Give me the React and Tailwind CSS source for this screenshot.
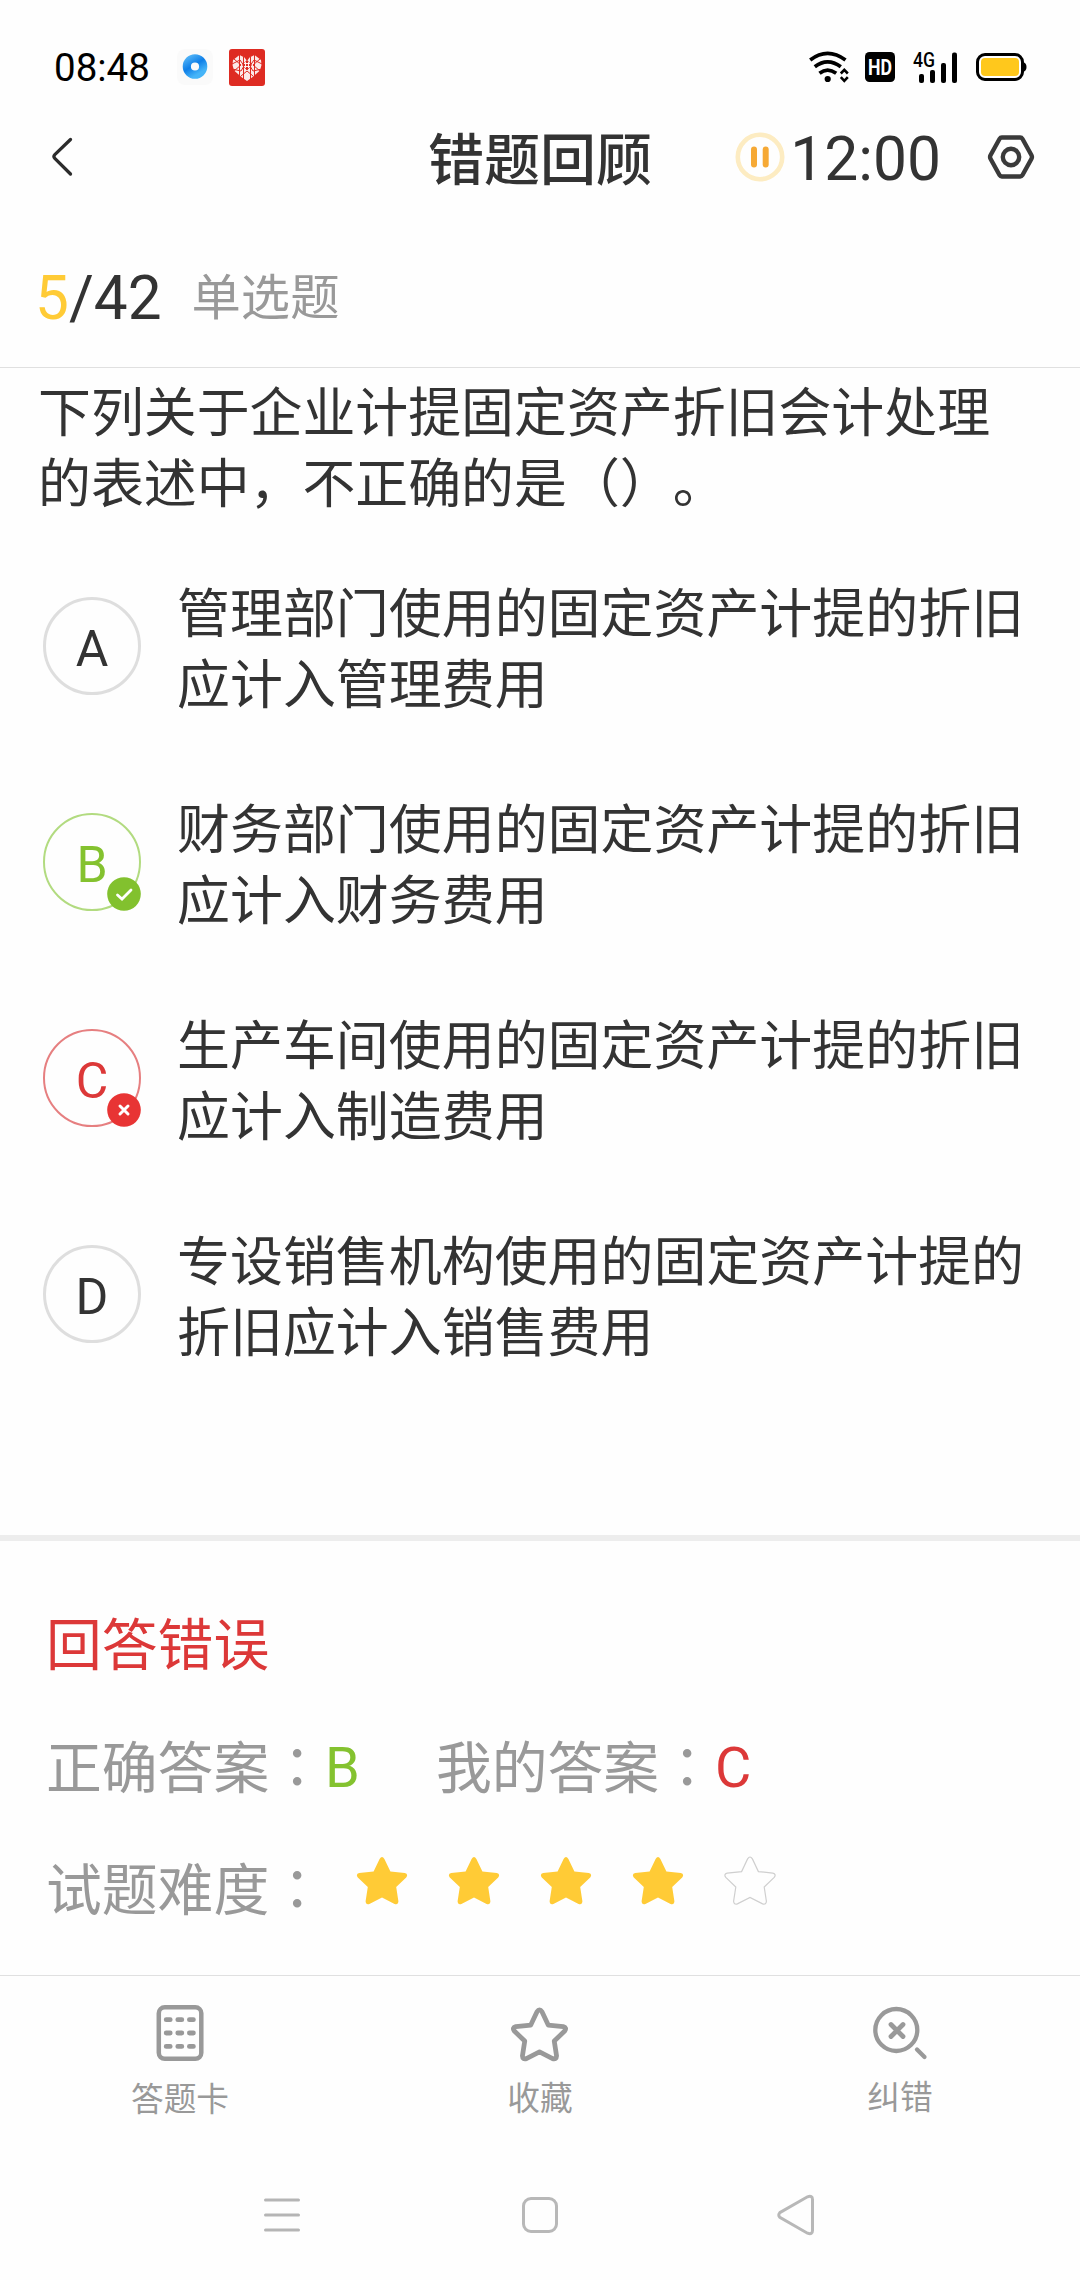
const STAR =
  "M22.6 2.9 Q25 -0.9 27.4 2.9 L33.4 15.6 L47.8 17.1 Q51.6 18.2 49.2 21.4 L39.2 31 L41.4 45.2 Q41.2 49 37.6 47.9 L25 41.5 L12.4 47.9 Q8.8 49 8.6 45.2 L10.8 31 L0.8 21.4 Q-1.6 18.2 2.2 17.1 L16.6 15.6 Z";

function StatusBar() {
  return (
    <div className="flex h-[112px] items-center pt-[22px] pl-[54px] pr-[53px]">
      <span className="mt-[2px] w-[98px] font-['Roboto'] text-[38.5px] leading-none text-black">08:48</span>
      <svg className="ml-[25px] shrink-0" width="36" height="36" viewBox="0 0 36 36">
        <defs>
          <linearGradient id="ring" x1="0" y1="0" x2="0.6" y2="1">
            <stop offset="0" stopColor="#4aaef5" />
            <stop offset="0.5" stopColor="#0f7fe8" />
            <stop offset="1" stopColor="#45b4f8" />
          </linearGradient>
        </defs>
        <rect width="36" height="36" rx="8" fill="#fafafa" />
        <circle cx="18" cy="17.5" r="8.2" fill="none" stroke="url(#ring)" strokeWidth="8.2" />
      </svg>
      <svg className="ml-[16px] shrink-0" width="36" height="37" viewBox="0 0 36 37">
        <rect width="36" height="37" rx="3" fill="#de2b22" />
        <path d="M18 32 L13 28.500 L5 21.500 L3.500 16 L4 11 L10.500 6 L15.500 8.500 L18 12 L20.500 8.500 L25.500 6 L32 11 L32.500 16 L31 21.500 L23 28.500 Z" fill="#fbe9e8" />
        <path d="M3 15 L11 11 L18 21 L25 11 L33 15 M3 20 L12 22 L18 12 L24 22 L33 20 M10.500 6 V27 M25.500 6 V27 M14.500 8 V30 M21.500 8 V30 M5 10 L12 16 L5 22 M31 10 L24 16 L31 22 M12 27 L18 22 L24 27" stroke="#de2b22" strokeWidth="1" fill="none" />
        <path d="M18 11 L23 16 L18 21 L13 16 Z" fill="#de2b22" />
        <path d="M15 14.500 H21 M15 17.500 H21 M16.500 13 V19 M19.500 13 V19" stroke="#fff" strokeWidth="0.9" />
      </svg>
      <div className="ml-auto flex items-center">
        <svg width="40" height="32" viewBox="0 0 40 32">
          <g fill="none" stroke="#000" strokeWidth="3.700">
            <path d="M1.200 9 Q18.500 -4.200 36.500 9" />
            <path d="M5.800 15.800 Q18.500 5.800 31.800 15.800" />
            <path d="M10.500 22.300 Q18.500 16 27.200 22.300" />
          </g>
          <circle cx="18.700" cy="28" r="3.100" />
          <path d="M31.800 22.500 L35.300 18.800 L38.800 22.500 M31.800 26.200 L35.300 29.900 L38.800 26.200" stroke="#000" strokeWidth="2.600" fill="none" />
        </svg>
        <svg className="ml-[16px] overflow-visible" width="30" height="30" viewBox="0 0 30 30">
          <rect width="30" height="30" rx="4.500" />
          <text x="3" y="23" textLength="24" lengthAdjust="spacingAndGlyphs" fill="#fff" className="font-['Roboto'] text-[22px] font-bold">HD</text>
        </svg>
        <svg className="ml-[18px] overflow-visible" width="45" height="31" viewBox="0 0 45 31">
          <text x="0" y="15" textLength="22" lengthAdjust="spacingAndGlyphs" className="font-['Roboto'] text-[20px] font-medium">4G</text>
          <rect x="6" y="22" width="5" height="9" rx="2" />
          <rect x="17" y="18" width="5" height="13" rx="2" />
          <rect x="28" y="11" width="5" height="20" rx="2" />
          <rect x="39" y="0.500" width="5" height="30.500" rx="2" />
        </svg>
        <svg className="ml-[18px]" width="51" height="28" viewBox="0 0 51 28">
          <rect x="1.500" y="1.500" width="45" height="25" rx="7.500" fill="#fff" stroke="#000" strokeWidth="3" />
          <path d="M47 9 Q50.500 10 50.500 14 Q50.500 18 47 19 Z" />
          <rect x="5" y="5" width="38" height="18" rx="4" fill="#ffc81c" />
        </svg>
      </div>
    </div>
  );
}

function Header() {
  return (
    <div className="grid h-[90px] grid-cols-[1fr_auto_1fr] items-center">
      <svg className="ml-[50px]" width="24" height="40" viewBox="0 0 24 40">
        <path d="M20.500 2.500 L4.800 17.600 Q2.900 19.500 4.800 21.400 L20.500 37" fill="none" stroke="#2c2c2c" strokeWidth="3.300" strokeLinecap="round" />
      </svg>
      <h1 className="-mt-[2px] font-['Noto_Sans_CJK_SC',sans-serif] text-[56px] leading-[80px] font-medium text-[#333333]">错题回顾</h1>
      <div className="flex items-center justify-end pr-[45px]">
        <svg width="50" height="50" viewBox="0 0 50 50">
          <circle cx="25" cy="25" r="22.200" fill="none" stroke="#fdecc2" strokeWidth="4.600" />
          <rect x="16" y="14.500" width="6" height="21" rx="3" fill="#f6a935" />
          <rect x="27.700" y="14.500" width="6" height="21" rx="3" fill="#f6a935" />
        </svg>
        <span className="ml-[5px] mt-[6px] font-['Roboto'] text-[60.5px] leading-none text-[#333333]">12:00</span>
        <svg className="ml-[46px]" width="48" height="46" viewBox="0 0 48 46">
          <path d="M14.800 3.500 H33.200 Q34.600 3.500 35.400 4.800 L44.500 21.300 Q45.400 23 44.500 24.700 L35.400 41.200 Q34.600 42.500 33.200 42.500 H14.800 Q13.400 42.500 12.600 41.200 L3.500 24.700 Q2.600 23 3.500 21.300 L12.600 4.800 Q13.400 3.500 14.800 3.500 Z" fill="none" stroke="#3a3a3a" strokeWidth="4.400" />
          <circle cx="24" cy="23" r="8.200" fill="none" stroke="#3a3a3a" strokeWidth="4.400" />
        </svg>
      </div>
    </div>
  );
}

const OPTIONS = [
  { key: "A", text: "管理部门使用的固定资产计提的折旧应计入管理费用" },
  { key: "B", text: "财务部门使用的固定资产计提的折旧应计入财务费用", state: "right" },
  { key: "C", text: "生产车间使用的固定资产计提的折旧应计入制造费用", state: "wrong" },
  { key: "D", text: "专设销售机构使用的固定资产计提的折旧应计入销售费用" },
];

const MARKS = {
  right: "border-[2px] border-[#b2db80] text-[#84c22f]",
  wrong: "border-[2px] border-[#e67f80] text-[#dc3838]",
  plain: "border-[3px] border-[#dedede] text-[#333333]",
};

function Option({ item }) {
  return (
    <li className="flex h-[216px] items-center pl-[43px]">
      <div className={`relative flex size-[98px] shrink-0 items-center justify-center rounded-full font-['Roboto'] text-[50px] leading-none ${MARKS[item.state || "plain"]}`}>
        <span className="mt-[5px]">{item.key}</span>
        {item.state && (
          <svg className="absolute -right-[2px] -bottom-[2px]" width="34" height="34" viewBox="0 0 34 34">
            <circle cx="17" cy="17" r="16.800" fill={item.state === "right" ? "#82c12e" : "#e83434"} />
            {item.state === "right" ? (
              <path d="M10.500 18 L15 22 L24 13" fill="none" stroke="#fff" strokeWidth="2.800" strokeLinecap="round" />
            ) : (
              <path d="M13 13 L21 21 M21 13 L13 21" stroke="#fff" strokeWidth="3" strokeLinecap="round" />
            )}
          </svg>
        )}
      </div>
      <p className="ml-[36px] w-[860px] text-[52.95px] leading-[71.3px] text-[#333333]">{item.text}</p>
    </li>
  );
}

function Colon() {
  return <span className="font-['Noto_Sans_CJK_TC']">：</span>;
}

function Result() {
  return (
    <section className="h-[440px] border-t-[6px] border-[#ededed] pt-[39px] pl-[46px] text-[55.8px] leading-[122.5px] text-[#999999]">
      <p className="h-[122.5px] text-[#dc3838]">回答错误</p>
      <div className="flex h-[122.5px]">
        <span>正确答案<Colon /></span>
        <span className="w-[111px] pt-[4px] font-['Roboto'] text-[#84c22f]">B</span>
        <span>我的答案<Colon /></span>
        <span className="pt-[4px] font-['Roboto'] text-[#dc3838]">C</span>
      </div>
      <div className="flex h-[122.5px]">
        <span>试题难度<Colon /></span>
        <div className="ml-[31px] flex gap-[40px] pt-[30px]">
          {[1, 2, 3, 4, 5].map((n) => (
            <svg key={n} width="52" height="50" viewBox="-1 -1 52 50">
              <path d={STAR} fill={n < 5 ? "#ffcb36" : "none"} stroke={n < 5 ? "none" : "#cfcfcf"} strokeWidth="1.200" />
            </svg>
          ))}
        </div>
      </div>
    </section>
  );
}

function Tabs() {
  return (
    <nav className="grid h-[174px] grid-cols-3 border-t border-[#e0e0e0] pt-[28px] text-[32.7px] leading-[44px] text-[#999999]">
      <div className="flex flex-col items-center gap-[13px]">
        <svg width="48" height="58" viewBox="0 0 48 58">
          <rect x="2.800" y="3.300" width="42.500" height="51.500" rx="6" fill="none" stroke="#999" strokeWidth="4.500" />
          <path d="M10.200 15.700 h4 m7.600 0 h4 m7.600 0 h4 M10.200 29 h4 m7.600 0 h4 m7.600 0 h4 M10.200 42.400 h4 m7.600 0 h4 m7.600 0 h4" stroke="#999" strokeWidth="4.800" strokeLinecap="round" />
        </svg>
        <span>答题卡</span>
      </div>
      <div className="flex flex-col items-center gap-[12px]">
        <svg width="58" height="58" viewBox="0 0 58 58">
          <path d={STAR} transform="translate(2.500 4.800) scale(1.040)" fill="none" stroke="#999" strokeWidth="4.600" strokeLinejoin="round" />
        </svg>
        <span>收藏</span>
      </div>
      <div className="flex flex-col items-center gap-[11px]">
        <svg width="56" height="58" viewBox="0 0 56 58">
          <g fill="none" stroke="#999" strokeWidth="4.300" strokeLinecap="round">
            <circle cx="24.300" cy="26" r="21" />
            <path d="M19 20.500 L31 32.500 M31 20.500 L19 32.500" strokeWidth="4.800" />
            <path d="M45 45.500 L52.500 53" />
          </g>
        </svg>
        <span>纠错</span>
      </div>
    </nav>
  );
}

function SystemNav() {
  return (
    <div className="flex h-[131px] items-center pl-[263px]">
      <svg width="38" height="36" viewBox="0 0 38 36">
        <path d="M2.500 3 H35.500 M2.500 18 H35.500 M2.500 33 H35.500" stroke="#b5b5b5" strokeWidth="3" strokeLinecap="round" />
      </svg>
      <div className="ml-[221px] size-[36px] rounded-[9px] border-[3px] border-[#b8b8b8]" />
      <svg className="ml-[219px]" width="38" height="42" viewBox="0 0 38 42">
        <path d="M2.800 18.600 L30.500 2.800 Q35.500 1 35.500 5.500 V36.500 Q35.500 41 30.500 39.200 L2.800 23.400 Q0.800 21 2.800 18.600 Z" fill="none" stroke="#b8b8b8" strokeWidth="3" />
      </svg>
    </div>
  );
}

export default function App() {
  return (
    <main className="flex h-[2280px] w-[1080px] flex-col overflow-hidden bg-[#fefefe] font-['Noto_Sans_CJK_SC',sans-serif] [text-spacing-trim:space-all]">
      <StatusBar />
      <Header />
      <div className="flex h-[166px] items-center border-b border-[#e0e0e0] pt-[25px] pl-[35px]">
        <span className="mt-[4px] font-['Roboto'] text-[60.3px] leading-none text-[#333333]">
          <span className="text-[#ffcb36]">5</span>/42
        </span>
        <span className="-mt-[6px] ml-[30px] text-[49.3px] leading-[70px] text-[#999999]">单选题</span>
      </div>
      <section className="h-[1167px]">
        <p className="h-[170px] w-[1000px] pt-[6px] pl-[38px] text-[52.9px] leading-[71.2px] text-[#333333]">
          下列关于企业计提固定资产折旧会计处理的表述中，不正确的是（）。
        </p>
        <ul>
          {OPTIONS.map((item) => (
            <Option key={item.key} item={item} />
          ))}
        </ul>
      </section>
      <Result />
      <Tabs />
      <SystemNav />
    </main>
  );
}
